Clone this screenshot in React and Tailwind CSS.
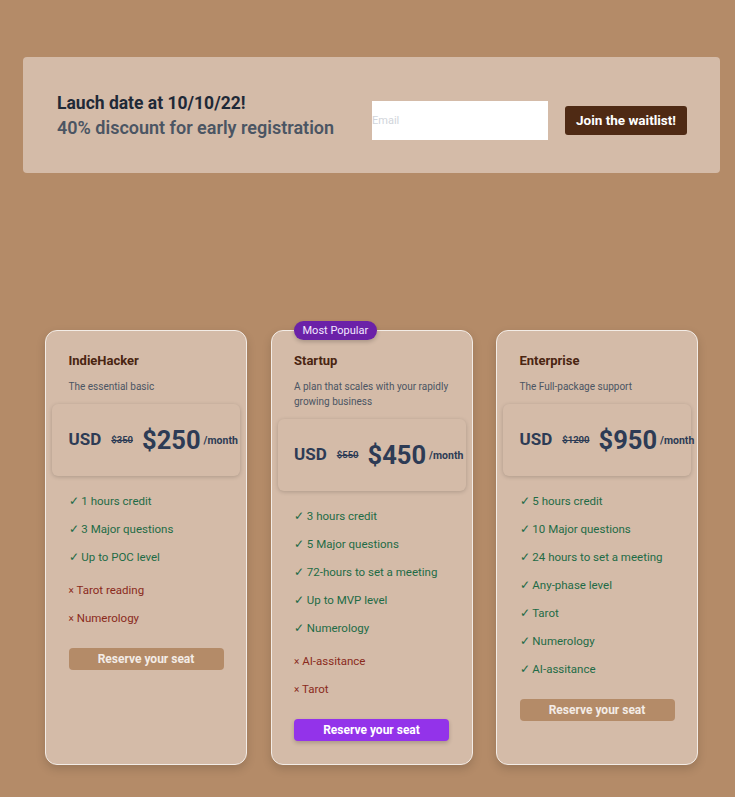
import React from "react";

const plans = [
  {
    name: "IndieHacker",
    desc: "The essential basic",
    old: "$350",
    price: "$250",
    yes: ["1 hours credit", "3 Major questions", "Up to POC level"],
    no: ["Tarot reading", "Numerology"],
    popular: false,
  },
  {
    name: "Startup",
    desc: "A plan that scales with your rapidly growing business",
    old: "$550",
    price: "$450",
    yes: ["3 hours credit", "5 Major questions", "72-hours to set a meeting", "Up to MVP level", "Numerology"],
    no: ["AI-assitance", "Tarot"],
    popular: true,
  },
  {
    name: "Enterprise",
    desc: "The Full-package support",
    old: "$1200",
    price: "$950",
    yes: ["5 hours credit", "10 Major questions", "24 hours to set a meeting", "Any-phase level", "Tarot", "Numerology", "AI-assitance"],
    no: [],
    popular: false,
  },
];

function Card({ p }) {
  return (
    <div className="relative flex w-[202px] flex-col rounded-[12px] border border-[#f3ece6] bg-[#d4bba8] pb-[23px] shadow-[0_4px_10px_rgba(0,0,0,0.15)]">
      {p.popular && (
        <div className="absolute left-[22px] top-[-10px] rounded-full bg-[#6b21a8] px-[9px] py-[2px] text-[11px] leading-[15px] text-[#f3e8ff] shadow-[0_2px_4px_rgba(0,0,0,0.2)]">
          Most Popular
        </div>
      )}
      <div className="pl-[22.5px] pr-[14px] pt-[21px]">
        <div className="text-[13px] font-bold leading-[18px] text-[#4a2511]">{p.name}</div>
        <div className="mt-[9px] text-[10px] leading-[15px] text-[#4b5563]">{p.desc}</div>
      </div>
      <div className="mx-[6px] mt-[10px] flex h-[72px] items-center whitespace-nowrap rounded-[6px] bg-[#d4bba8] pl-[16.5px] shadow-[0_1px_4px_rgba(0,0,0,0.18)] text-[#2d3b55]">
        <span className="text-[17px] font-bold">USD</span>
        <span className="ml-[10px] text-[9.5px] font-bold line-through">{p.old}</span>
        <span className="ml-[9px] text-[25.5px] font-bold">{p.price}</span>
        <span className="ml-[3px] mt-[2px] text-[10.5px] font-bold">/month</span>
      </div>
      <div className="mt-[16px] px-[22.5px]">
        {p.yes.map((f) => (
          <div key={f} className="h-[28px] whitespace-nowrap text-[11.5px] leading-[18px] text-[#1e6b46]">
            ✓ {f}
          </div>
        ))}
        {p.no.length > 0 && (
          <div className="mt-[5px]">
            {p.no.map((f) => (
              <div key={f} className="h-[28px] whitespace-nowrap text-[11.5px] leading-[18px] text-[#8a2a1c]">
                <span className="text-[10px]">×</span> {f}
              </div>
            ))}
          </div>
        )}
      </div>
      <div className="mt-[9px] px-[22.5px]">
        <button
          className={
            p.popular
              ? "h-[22px] w-full rounded-[4px] bg-[#9333ea] text-[12px] font-bold text-white shadow-[0_2px_4px_rgba(0,0,0,0.2)]"
              : "h-[22px] w-full rounded-[4px] bg-[#b48b68] text-[12px] font-bold text-[#f3ece6]"
          }
        >
          Reserve your seat
        </button>
      </div>
    </div>
  );
}

export default function App() {
  return (
    <div
      className="min-h-[797px] w-full bg-[#b48b68] pt-[57px]"
      style={{ fontFamily: 'Roboto, "Noto Sans", sans-serif' }}
    >
      <div className="ml-[23px] flex h-[116px] w-[697px] items-center rounded-[4px] bg-[#d4bba8] pl-[34px]">
        <div className="w-[315px]">
          <div className="text-[17.5px] font-bold leading-[22px] text-[#1f2937]">Lauch date at 10/10/22!</div>
          <div className="mt-[3px] text-[18px] font-semibold leading-[22px] text-[#4b5563]">40% discount for early registration</div>
        </div>
        <div className="mt-[10px] flex items-center">
          <input
            placeholder="Email"
            className="h-[39px] w-[176px] bg-white text-[11px] text-black outline-none placeholder:text-[#d1d5db]"
          />
          <button className="ml-[17px] h-[29px] w-[122px] rounded-[3px] bg-[#4f2a14] text-[13.5px] font-bold text-white">
            Join the waitlist!
          </button>
        </div>
      </div>
      <div className="ml-[45px] mt-[157px] flex items-stretch gap-[23.5px]">
        {plans.map((p) => (
          <Card key={p.name} p={p} />
        ))}
      </div>
    </div>
  );
}
